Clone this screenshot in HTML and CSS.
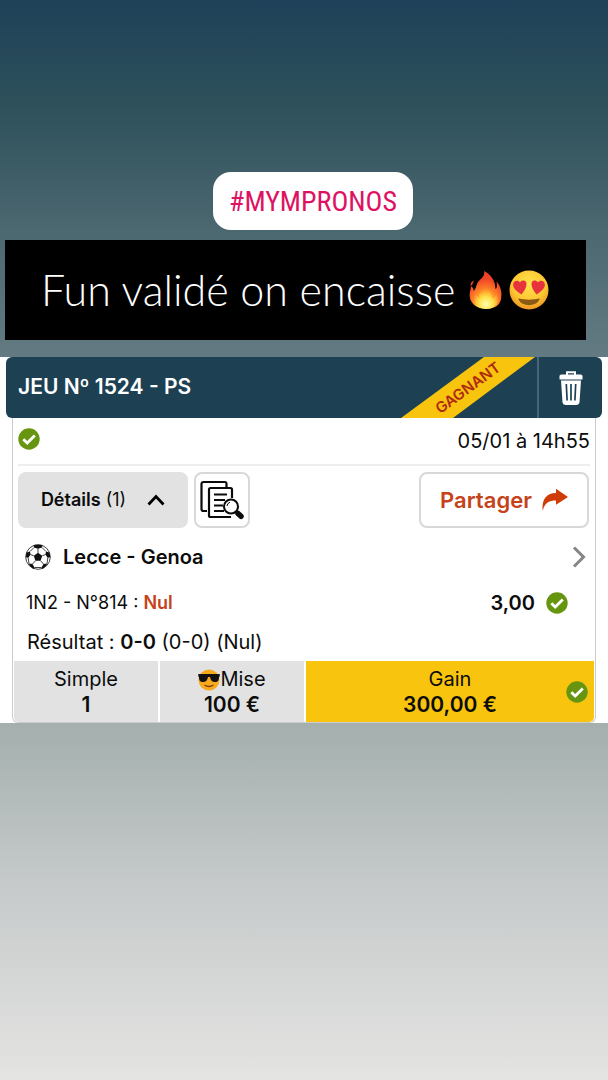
FILE: index.html
```html
<!DOCTYPE html>
<html lang="fr">
<head>
<meta charset="utf-8">
<meta name="viewport" content="width=device-width, initial-scale=1">
<title>Jeu Nº 1524 - PS</title>
<link rel="stylesheet" href="styles.css">
</head>
<body>
<svg class="defs" aria-hidden="true">
  <symbol id="check" viewBox="0 0 22 22">
    <circle cx="11" cy="11" r="10.7" fill="#66960f"/>
    <path d="M5.3 11.2l3.9 3.9 7.6-7.6" fill="none" stroke="#fff" stroke-width="2.8"/>
  </symbol>
</svg>
<main class="story">
  <a class="hashtag" href="#mympronos">#MYMPRONOS</a>
  <p class="caption">
    <span>Fun validé on encaisse</span>
    <svg class="fire" viewBox="0 0 36 42" role="img" aria-label="feu">
      <defs>
        <radialGradient id="flame" cx=".5" cy=".88" r=".8">
          <stop offset="0" stop-color="#fff9a0"/><stop offset=".22" stop-color="#ffd52e"/><stop offset=".5" stop-color="#ff8427"/><stop offset=".85" stop-color="#ee4328"/>
        </radialGradient>
        <radialGradient id="core" cx=".5" cy=".8" r=".7">
          <stop offset="0" stop-color="#fffbb0"/><stop offset=".45" stop-color="#ffe04a"/><stop offset="1" stop-color="#ff9a2c" stop-opacity="0"/>
        </radialGradient>
      </defs>
      <path fill="url(#flame)" d="M16 1C25 6 28 13 28 20c2-1 2-4 1-8 5 5 6 12 5 18-1 7-7 11-16 11S2 36 1 29c-1-5 1-8 1-12 2 1 3 3 3 5 3-3 2-6 5-10 4-4 7-6 6-11zM5 11c0 3-2 4-3 6-1-3 1-5 3-6z"/>
      <path fill="url(#core)" d="M18 16c6 6 5 10 7 14 2-1 4-3 4-6 4 9 0 17-11 17S3 34 7 25c1 2 2 4 4 4-1-6 5-7 7-13z"/>
    </svg>
    <svg class="face" viewBox="0 0 40 40" role="img" aria-label="yeux en cœur">
      <defs>
        <radialGradient id="skin" cx=".5" cy=".35" r=".65">
          <stop offset="0" stop-color="#ffe34c"/><stop offset=".65" stop-color="#fdc732"/><stop offset="1" stop-color="#ee9621"/>
        </radialGradient>
      </defs>
      <circle cx="20" cy="20" r="19.5" fill="url(#skin)"/>
      <path fill="#e6333c" d="M12.500 24.500C7.500 21 3.500 18 4.200 14c.8-4 5.300-4 6.800-1.500 2-3 6.500-2.500 6.500 1.500 0 4-2.500 7-5 10.500z"/>
      <path fill="#e6333c" d="M27.500 24.500c5-3.500 9-6.500 8.300-10.500-.8-4-5.300-4-6.800-1.500-2-3-6.500-2.500-6.500 1.500 0 4 2.500 7 5 10.500z"/>
      <path fill="#8a5a14" d="M10 28.500c6 1.500 14 1.500 20 0 .5 0 .8.300.5 1C27 37 13 37 9.500 29.500c-.3-.7 0-1 .5-1z"/>
    </svg>
  </p>

  <section class="ticket">
    <header class="head">
      <h1 class="title">JEU Nº 1524 - PS</h1>
      <svg class="ribbon" viewBox="0 0 134 61" role="img" aria-label="Gagnant">
        <path d="M0 61 83 0h51L52 61z" fill="#f8c40e"/>
        <text class="ribbon-text" transform="translate(70 35) rotate(-36)" text-anchor="middle">GAGNANT</text>
      </svg>
      <button class="trash" type="button" aria-label="Supprimer">
        <svg viewBox="0 0 24 34" width="24" height="34">
          <path d="M8 4V1.2h8V4" fill="none" stroke="#fff" stroke-width="2"/>
          <path d="M2.5 3.5h19A2 2 0 0 1 23.5 6v2.5H.5V6a2 2 0 0 1 2-2.500z" fill="#fff"/>
          <path d="M2 9.500h20l-1.500 22a3 3 0 0 1-3 2.500h-11a3 3 0 0 1-3-2.500z" fill="#fff"/>
          <path d="M7.300 13l.8 16.500M12 13v16.500M16.700 13l-.8 16.500" stroke="#1d4152" stroke-width="1.700"/>
        </svg>
      </button>
    </header>

    <div class="body">
      <div class="date-row">
        <svg class="check" role="img" aria-label="Gagné"><use href="#check"/></svg>
        <time class="date" datetime="01-05T14:55">05/01 à 14h55</time>
      </div>
      <div class="actions">
        <button class="btn details" type="button" aria-expanded="true">
          <span><b>Détails</b> (1)</span>
          <svg width="18" height="12" viewBox="0 0 18 12"><path d="M1.500 10.500 9 2.500l7.500 8" fill="none" stroke="#000" stroke-width="2.800"/></svg>
        </button>
        <button class="btn docs" type="button" aria-label="Voir le ticket">
          <svg width="44" height="40" viewBox="0 0 44 40" fill="none" stroke="#0b0b0b" stroke-width="2.200">
            <path d="M7 31H3.500A2 2 0 0 1 1.500 29V4a2 2 0 0 1 2-2H25a1.500 1.500 0 0 1 1.500 1.500V7"/>
            <path d="M32 18v-8.500A1.500 1.500 0 0 0 30.500 8h-20A1.500 1.500 0 0 0 9 9.500v26A1.500 1.500 0 0 0 10.500 37H31"/>
            <path d="M14 14.500h13M14 20h11M14 25.500h9M14 31h10"/>
            <circle cx="31" cy="26.500" r="7" fill="#fff" stroke-width="2"/>
            <path d="M27 26a4.500 4.500 0 0 1 3-3.800" stroke-width="1"/>
            <path d="M36 31.500l2 2"/><path d="M38 33.500l3 2.800" stroke-width="5.500" stroke-linecap="round"/>
          </svg>
        </button>
        <button class="btn share" type="button">
          <span>Partager</span>
          <svg width="26" height="24" viewBox="0 0 26 24"><path fill="#d03c08" d="M.7 23C-.5 12 4 5 14 5V.7L26 9l-12 7.700v-4.200C7 12.500 2.500 15 .7 23z"/></svg>
        </button>
      </div>
      <a class="match" href="#match">
        <svg class="ball" viewBox="0 0 26 26">
          <circle cx="13" cy="13" r="12.300" fill="#fff" stroke="#111" stroke-width=".8"/>
          <g fill="#111">
            <path d="M13 8.800l4.200 3-1.600 5h-5.200l-1.600-5z"/>
            <path d="M8.500 1.500L13 3.200l4.500-1.700L16 .8h-6zM8.500 1.500L9 3.500l4 1.300 4-1.300.5-2z"/>
            <path d="M1.500 8.500L5 7.500l.6 3.100L3.200 14 .8 13zM24.500 8.500L21 7.500l-.6 3.100 2.400 3.400 2.400-1z"/>
            <path d="M3.500 19.500l4 .5 2 3.500-.8 1.500C6.500 24 5 22 3.500 19.500zM22.500 19.500l-4 .5-2 3.500.8 1.500c2.200-1 3.700-3 5.200-5.500z"/>
          </g>
          <path d="M13 8.800V4.500M17.200 11.800l3.300-1.300M8.800 11.800l-3.300-1.300M10.400 16.800L7.500 20M15.600 16.800L18.500 20M3.200 14l.8 5.500M22.800 14l-.8 5.500M9 3.500L5 7.500M17 3.500l4 4M9.500 23.500h7" stroke="#111" stroke-width=".8" fill="none"/>
        </svg>
        <b>Lecce - Genoa</b>
        <svg class="next" viewBox="0 0 14 22"><path d="M2 1.500 11.500 11 2 20.500" fill="none" stroke="#858585" stroke-width="3"/></svg>
      </a>
      <div class="bet">
        <span>1N2 - N°814 : <b class="pick">Nul</b></span>
        <b class="odds">3,00</b>
        <svg class="check" role="img" aria-label="Gagné"><use href="#check"/></svg>
      </div>
      <p class="result">Résultat : <b>0-0</b> (0-0) (Nul)</p>
      <dl class="totals">
        <div class="cell"><dt>Simple</dt><dd>1</dd></div>
        <div class="cell">
          <dt>
            <svg class="cool" viewBox="0 0 22 22" aria-hidden="true">
              <circle cx="11" cy="11" r="10.500" fill="#f9a91d"/>
              <path d="M.3 5h21.400v2.500l-.7.500c0 3-1 5-4 5s-4.500-2-5-5h-2c-.5 3-2 5-5 5s-4-2-4-5l-.7-.5z" fill="#111"/>
              <path d="M6.500 16c3 2 6 2 9 0" fill="none" stroke="#7c3e0a" stroke-width="1.300"/>
            </svg>Mise</dt>
          <dd>100 €</dd>
        </div>
        <div class="cell gain">
          <dt>Gain</dt><dd>300,00 €</dd>
          <svg class="check" role="img" aria-label="Gagné"><use href="#check"/></svg>
        </div>
      </dl>
    </div>
  </section>
</main>
</body>
</html>
```
FILE: styles.css
```css
* { box-sizing: border-box; }
body {
  margin: 0;
  min-height: 100vh;
  font: 20px/24px Inter, "Liberation Sans", sans-serif;
  color: #0c0c0c;
  background: linear-gradient(#1f4159 0%, #2e515b 10%, #4b6770 21%, #637a82 33%, #a4afae 67%, #c6caca 82%, #e4e4e2 100%);
}
b { font-weight: 600; }
button { margin: 0; padding: 0; font: inherit; color: inherit; cursor: pointer; }
svg { flex: none; }
.defs { position: absolute; width: 0; height: 0; }
.check { width: 22px; height: 22px; }

.story { display: flex; flex-direction: column; padding-top: 172px; }
.hashtag {
  align-self: center;
  margin-left: 18px;
  padding: 1px 16px 0;
  border-radius: 18px;
  background: #fff;
  color: #dd1263;
  font: 28px/57px "Liberation Sans Narrow", "Roboto Condensed", Roboto, sans-serif;
  text-decoration: none;
}
.caption {
  display: flex;
  align-items: center;
  margin: 10px 22px 17px 5px;
  padding: 0 36px;
  height: 100px;
  background: #000;
  color: #fff;
  font: 300 43px/50px Lato, sans-serif;
  white-space: nowrap;
}
.fire { width: 34px; height: 42px; margin-left: 14px; }
.face { width: 40px; height: 40px; margin-left: 6px; }

.ticket { padding: 0 6px; background: #fff; }
.head {
  display: flex;
  height: 61px;
  border-radius: 6px;
  overflow: hidden;
  background: #1d4152;
  color: #fff;
}
.title { flex: 1; margin: 0; padding-left: 12px; font-size: 21px; line-height: 60px; font-weight: 600; }
.ribbon { width: 134px; height: 61px; margin-right: 2px; }
.ribbon-text { font-size: 15px; font-weight: 600; fill: #b02a10; }
.trash {
  display: grid;
  place-items: center;
  width: 65px;
  border: 0;
  border-left: 2px solid #48667a;
  background: none;
}

.body {
  margin: 0 6px;
  border: solid #ccc;
  border-width: 0 1px 1px;
  border-radius: 0 0 6px 6px;
  padding: 0 1px;
}
.date-row {
  display: flex;
  justify-content: space-between;
  align-items: flex-start;
  height: 48px;
  margin: 0 4px;
  padding-top: 10px;
  border-bottom: 2px solid #eee;
}
.date { padding-top: 1px; }
.actions { display: flex; gap: 6px; margin: 6px 5px 0 4px; }
.btn {
  display: flex;
  align-items: center;
  justify-content: center;
  height: 56px;
  border: 2px solid #d8d8d8;
  border-radius: 8px;
  background: #fff;
}
.details { width: 170px; gap: 21px; border-color: #e2e2e2; background: #e2e2e2; font-size: 18px; }
.docs { width: 56px; }
.share { width: 170px; gap: 10px; margin-left: auto; color: #c5421a; font-size: 22px; font-weight: 600; }
.match {
  display: flex;
  align-items: center;
  height: 58px;
  padding: 0 8px 0 11px;
  color: inherit;
  text-decoration: none;
}
.ball { width: 26px; height: 26px; margin-right: 12px; }
.next { width: 14px; height: 22px; margin-left: auto; }
.bet { display: flex; align-items: center; height: 34px; padding: 0 26px 0 12px; font-size: 18px; }
.pick { color: #c5421a; }
.odds { margin: 0 11px 0 auto; font-size: 20px; }
.result { margin: 0; padding: 10px 13px 7px; }
.totals { display: grid; grid-template-columns: 1fr 1fr 2fr; gap: 2px; margin: 0; }
.cell {
  position: relative;
  padding: 6px 0 5px;
  background: #e2e2e2;
  text-align: center;
  line-height: 25px;
}
.cell:first-child { border-bottom-left-radius: 5px; }
.cell dt { display: flex; align-items: center; justify-content: center; }
.cell dd { margin: 0; font-size: 21px; font-weight: 600; }
.cool { width: 22px; height: 22px; }
.gain { background: #f8c40e; border-bottom-right-radius: 5px; }
.gain .check { position: absolute; right: 6px; top: 20px; }
```
